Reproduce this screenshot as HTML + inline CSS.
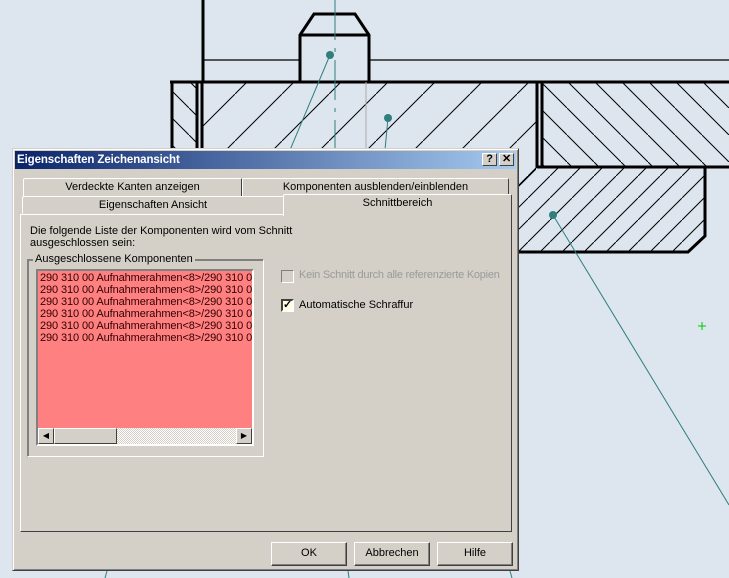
<!DOCTYPE html>
<html><head><meta charset="utf-8"><style>
*{margin:0;padding:0;box-sizing:border-box}
body{width:729px;height:578px;overflow:hidden;background:#dde5ee;position:relative;font-family:"Liberation Sans",sans-serif;font-size:11px;color:#000}
.a{position:absolute}
.dlg{left:12px;top:148px;width:507px;height:423px;background:#d4d0c8;border:1px solid;border-color:#d4d0c8 #404040 #404040 #d4d0c8;box-shadow:inset 1px 1px 0 #fff,inset -1px -1px 0 #808080}
.title{left:2px;top:2px;width:501px;height:18px;background:linear-gradient(90deg,#0a246a,#a6caf0);color:#fff;font-weight:bold;font-size:11.5px;padding:3px 2px;letter-spacing:-0.1px}
.tb{width:15px;height:13px;background:#d4d0c8;border:1px solid;border-color:#fff #404040 #404040 #fff;font-size:11px;font-weight:bold;text-align:center;line-height:11px;color:#000}
.tab{height:19px;background:#d4d0c8;border:1px solid;border-color:#fff #404040 transparent #fff;border-radius:2px 2px 0 0;text-align:center;line-height:16px;font-size:11px}
.panel{border:1px solid;border-color:#fff #404040 #404040 #fff}
.btn{width:76px;height:24px;border:1px solid;border-color:#fff #404040 #404040 #fff;box-shadow:inset -1px -1px 0 #808080;text-align:center;line-height:21px;font-size:11px}
.li{line-height:12px;font-size:11px;color:#300;white-space:nowrap;letter-spacing:-0.1px}
</style></head><body>
<svg class="a" style="left:0;top:0" width="729" height="578">
<defs>
<pattern id="h1" width="47" height="47" patternUnits="userSpaceOnUse"><line x1="0" y1="47" x2="47" y2="0" stroke="#000" stroke-width="1"/></pattern>
<pattern id="h2" width="27" height="27" patternUnits="userSpaceOnUse"><line x1="0" y1="0" x2="27" y2="27" stroke="#000" stroke-width="1"/></pattern>
<pattern id="h3" width="22" height="22" patternUnits="userSpaceOnUse"><line x1="0" y1="22" x2="22" y2="0" stroke="#000" stroke-width="1"/></pattern>
</defs>
<rect x="202" y="83" width="334" height="120" fill="url(#h1)"/>
<rect x="172" y="83" width="24" height="80" fill="url(#h2)"/>
<rect x="542" y="83" width="187" height="84" fill="url(#h2)"/>
<polygon points="518,168 705,168 705,236 688,252 518,252" fill="url(#h3)"/>
<g stroke="#000" stroke-width="3" fill="none">
<line x1="203" y1="0" x2="203" y2="82"/>
<polyline points="300,82 300,35 314,14 355,14 369,35 369,82"/>
<line x1="300" y1="35" x2="369" y2="35"/>
<line x1="170" y1="82" x2="729" y2="82"/>
<line x1="172" y1="82" x2="172" y2="160"/>
<line x1="197" y1="82" x2="197" y2="160"/>
<line x1="202" y1="82" x2="202" y2="160"/>
<line x1="537" y1="82" x2="537" y2="168"/>
<line x1="542" y1="82" x2="542" y2="168"/>
<line x1="537" y1="167" x2="729" y2="167"/>
<polyline points="518,252 688,252 705,236 705,167"/>
</g>
<line x1="203" y1="60" x2="300" y2="60" stroke="#000" stroke-width="1.3"/>
<line x1="369" y1="60" x2="729" y2="60" stroke="#000" stroke-width="1.3"/>
<line x1="335" y1="0" x2="335" y2="150" stroke="#2f7f7f" stroke-width="1" stroke-dasharray="40,8,4,8"/>
<line x1="366" y1="82" x2="366" y2="150" stroke="#aaa" stroke-width="1"/>
<g stroke="#2f7f7f" stroke-width="1"><line x1="330" y1="55" x2="290" y2="150"/><line x1="388" y1="118" x2="385" y2="150"/><line x1="553" y1="215" x2="729" y2="505"/><line x1="107" y1="571" x2="105" y2="578"/><line x1="348" y1="571" x2="349" y2="578"/><line x1="510" y1="571" x2="512" y2="578"/></g>
<g fill="#2f7f7f"><circle cx="330" cy="55" r="4"/><circle cx="388" cy="118" r="4"/><circle cx="553" cy="215" r="4"/></g>
<g stroke="#0c0" stroke-width="1"><line x1="698" y1="326" x2="706" y2="326"/><line x1="702" y1="322" x2="702" y2="330"/></g>
</svg>
<div class="a dlg">
<div class="a title">Eigenschaften Zeichenansicht
<div class="a tb" style="left:467px;top:2px">?</div><div class="a tb" style="left:484px;top:2px">✕</div></div>
<div class="a tab" style="left:10px;top:29px;width:219px">Verdeckte Kanten anzeigen</div>
<div class="a tab" style="left:229px;top:29px;width:267px">Komponenten ausblenden/einblenden</div>
<div class="a panel" style="left:7px;top:65px;width:492px;height:318px"></div>
<div class="a tab" style="left:9px;top:47px;width:262px;height:18px">Eigenschaften Ansicht</div>
<div class="a tab" style="left:270px;top:45px;width:229px;height:22px;border-bottom:none;background:#d4d0c8;line-height:16px">Schnittbereich</div>
<div class="a" style="left:17px;top:76px;line-height:12px">Die folgende Liste der Komponenten wird vom Schnitt<br>ausgeschlossen sein:</div>
<div class="a" style="left:14px;top:110px;width:237px;height:198px;border:1px solid;border-color:#808080 #fff #fff #808080;box-shadow:1px 1px 0 #808080 inset"></div>
<div class="a" style="left:20px;top:104px;background:#d4d0c8;padding:0 2px">Ausgeschlossene Komponenten</div>
<div class="a" style="left:23px;top:120px;width:218px;height:177px;border:2px solid;border-color:#808080 #fff #fff #808080;background:#ff8080;overflow:hidden">
<div class="li" style="padding:1px 0 0 2px">290 310 00 Aufnahmerahmen&lt;8&gt;/290 310 0<br>290 310 00 Aufnahmerahmen&lt;8&gt;/290 310 0<br>290 310 00 Aufnahmerahmen&lt;8&gt;/290 310 0<br>290 310 00 Aufnahmerahmen&lt;8&gt;/290 310 0<br>290 310 00 Aufnahmerahmen&lt;8&gt;/290 310 0<br>290 310 00 Aufnahmerahmen&lt;8&gt;/290 310 0</div>
<div class="a" style="left:0;bottom:0;width:214px;height:16px;background:repeating-conic-gradient(#fff 0 25%,#d4d0c8 0 50%) 0 0/2px 2px">
<div class="a" style="left:0;top:0;width:16px;height:16px;background:#d4d0c8;border:1px solid;border-color:#fff #404040 #404040 #fff;font-size:8px;line-height:13px;text-align:center">◀</div>
<div class="a" style="left:16px;top:0;width:63px;height:16px;background:#d4d0c8;border:1px solid;border-color:#fff #404040 #404040 #fff"></div>
<div class="a" style="right:0;top:0;width:16px;height:16px;background:#d4d0c8;border:1px solid;border-color:#fff #404040 #404040 #fff;font-size:8px;line-height:13px;text-align:center">▶</div>
</div></div>
<div class="a" style="left:268px;top:121px;width:13px;height:13px;border:1px solid;border-color:#808080 #fff #fff #808080"></div>
<div class="a" style="left:286px;top:120px;color:#9a9a9a;letter-spacing:-0.25px">Kein Schnitt durch alle referenzierte Kopien</div>
<div class="a" style="left:268px;top:150px;width:13px;height:13px;border:2px solid;border-color:#404040 #fff #fff #404040;background:#ffffe0;font-size:11px;line-height:9px;text-align:center;font-weight:bold">✓</div>
<div class="a" style="left:286px;top:150px">Automatische Schraffur</div>
<div class="a btn" style="left:258px;top:393px">OK</div>
<div class="a btn" style="left:341px;top:393px">Abbrechen</div>
<div class="a btn" style="left:424px;top:393px">Hilfe</div>
</div>
</body></html>
